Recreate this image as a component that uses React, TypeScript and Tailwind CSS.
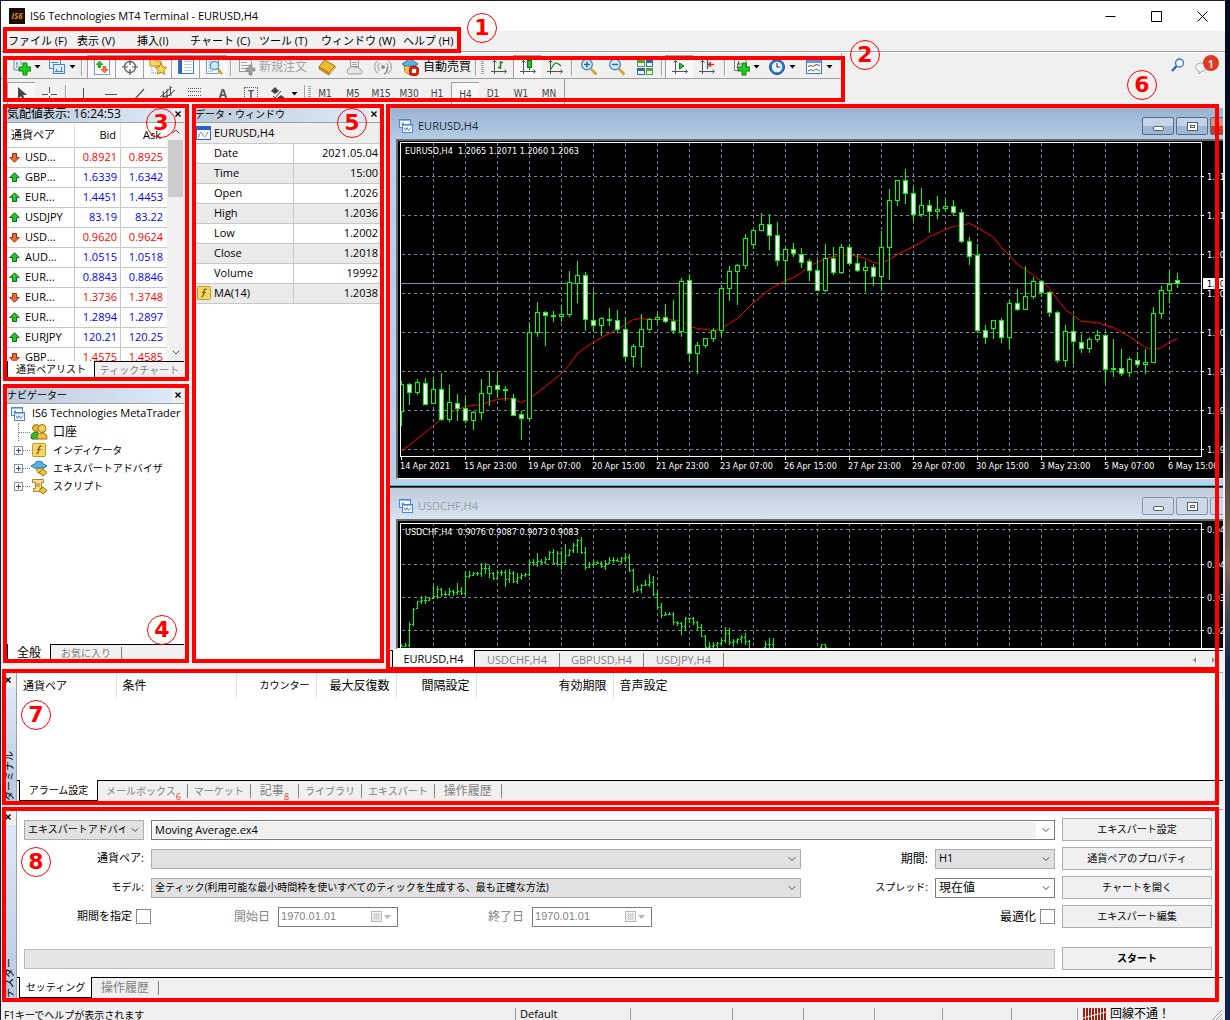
import type { ReactNode } from "react";
import { clsx } from "clsx";
import { ChevronDown, ChevronUp } from "lucide-react";

type Candle = [high: number, top: number, bottom: number, low: number, falling: 0 | 1];
type Bar = [index: number, high: number, low: number, close: number];

// y values are pixels from the top of the chart
const candles: Candle[] = [
  [240, 243, 270, 285, 0], [242, 243, 251, 264, 1], [238, 241, 251, 254, 0], [237, 242, 263, 264, 1],
  [236, 248, 262, 263, 0], [232, 248, 278, 280, 1], [244, 261, 278, 281, 0], [253, 262, 267, 280, 1],
  [256, 267, 279, 282, 1], [270, 271, 279, 289, 0], [238, 252, 271, 279, 0], [230, 245, 252, 265, 0],
  [232, 244, 248, 257, 1], [245, 248, 249, 260, 0], [253, 257, 274, 275, 1], [270, 273, 277, 299, 1],
  [181, 191, 277, 279, 0], [161, 171, 191, 196, 0], [170, 171, 174, 205, 1], [170, 174, 175, 181, 0],
  [164, 173, 175, 181, 0], [130, 141, 173, 176, 0], [120, 134, 142, 162, 0], [131, 134, 178, 190, 1],
  [150, 179, 184, 191, 1], [176, 177, 184, 195, 0], [167, 178, 179, 185, 0], [169, 179, 188, 192, 1],
  [176, 188, 215, 220, 1], [203, 205, 215, 226, 0], [173, 188, 205, 226, 0], [177, 178, 188, 190, 0],
  [172, 176, 178, 183, 0], [163, 176, 180, 182, 1], [159, 180, 189, 193, 1], [137, 140, 190, 196, 0],
  [133, 139, 212, 221, 1], [201, 204, 212, 233, 0], [197, 197, 204, 207, 0], [187, 189, 197, 201, 0],
  [144, 147, 189, 195, 0], [125, 130, 147, 160, 0], [123, 124, 130, 164, 0], [93, 97, 124, 128, 0],
  [87, 89, 103, 108, 0], [72, 83, 89, 90, 0], [73, 83, 94, 109, 1], [81, 94, 119, 125, 1],
  [107, 108, 119, 144, 0], [102, 108, 112, 116, 1], [107, 113, 121, 127, 1], [118, 120, 129, 140, 1],
  [119, 129, 149, 150, 1], [103, 117, 149, 151, 0], [106, 117, 131, 134, 1], [103, 106, 131, 133, 0],
  [103, 106, 122, 124, 1], [113, 122, 129, 131, 1], [120, 126, 129, 151, 0], [123, 126, 135, 145, 1],
  [90, 106, 135, 150, 0], [48, 59, 106, 139, 0], [39, 39, 59, 65, 0], [28, 39, 52, 63, 1],
  [45, 52, 73, 80, 1], [47, 64, 73, 76, 0], [59, 64, 70, 92, 1], [55, 68, 70, 78, 0],
  [59, 65, 67, 70, 0], [59, 65, 71, 75, 1], [68, 71, 100, 102, 1], [96, 100, 115, 124, 1],
  [103, 114, 189, 192, 1], [184, 189, 196, 203, 1], [179, 179, 187, 198, 0], [177, 179, 196, 202, 1],
  [159, 162, 196, 208, 0], [148, 162, 168, 170, 1], [125, 155, 168, 169, 0], [136, 140, 155, 158, 0],
  [139, 140, 151, 156, 1], [150, 151, 171, 176, 1], [170, 171, 219, 222, 1], [184, 190, 219, 226, 0],
  [175, 190, 200, 223, 1], [193, 201, 207, 212, 1], [196, 198, 207, 212, 0], [189, 194, 198, 201, 0],
  [193, 194, 228, 242, 1], [198, 227, 228, 236, 0], [208, 227, 232, 235, 1], [216, 218, 231, 236, 0],
  [211, 219, 223, 226, 1], [208, 221, 223, 233, 0], [166, 172, 221, 222, 0], [145, 149, 172, 178, 0],
  [130, 143, 149, 162, 0], [132, 139, 142, 147, 1],
];

const movingAverage = [
  [0, 310], [4, 284], [6, 271], [7, 268], [8, 265], [10, 263], [11, 260], [12, 258], [13, 257], [14, 258],
  [15, 261], [16, 257], [18, 245], [20, 232], [21, 223], [22, 212], [23, 206], [24, 201], [25, 196], [27, 188],
  [28, 183], [29, 178], [30, 177], [31, 178], [33, 178], [35, 179], [36, 185], [37, 187], [39, 189], [40, 187],
  [41, 182], [42, 177], [44, 161], [46, 148], [48, 139], [49, 136], [50, 131], [51, 124], [52, 121], [53, 117],
  [54, 115], [56, 113], [57, 115], [58, 117], [59, 121], [60, 122], [61, 118], [62, 113], [64, 105], [65, 101],
  [66, 95], [68, 88], [69, 85], [71, 82], [72, 86], [74, 96], [75, 106], [76, 114], [77, 123], [78, 128],
  [79, 134], [80, 140], [81, 147], [82, 158], [83, 168], [84, 174], [85, 180], [87, 181], [88, 184], [89, 186],
  [91, 195], [93, 206], [94, 208], [95, 206], [96, 201], [97, 197],
];

const bars: Bar[] = [
  [0, 123, 126, 125], [1, 122, 126, 124], [2, 101, 126, 103], [3, 87, 105, 88], [4, 80, 88, 80], [5, 75, 83, 79],
  [6, 75, 83, 79], [7, 76, 80, 77], [8, 65, 78, 75], [9, 65, 78, 68], [10, 67, 76, 73], [11, 70, 75, 73],
  [12, 67, 75, 70], [13, 69, 75, 71], [14, 62, 74, 70], [15, 66, 74, 72], [16, 51, 74, 55], [17, 50, 57, 54],
  [18, 51, 55, 52], [19, 51, 55, 52], [20, 42, 56, 47], [21, 42, 53, 47], [22, 44, 57, 52], [23, 51, 59, 57],
  [24, 49, 59, 51], [25, 49, 55, 51], [26, 49, 66, 58], [27, 48, 62, 52], [28, 50, 62, 60], [29, 52, 63, 56],
  [30, 52, 59, 54], [31, 52, 56, 53], [32, 39, 55, 41], [33, 38, 45, 41], [34, 32, 46, 40], [35, 38, 43, 41],
  [36, 36, 43, 38], [37, 30, 39, 31], [38, 28, 43, 42], [39, 30, 45, 32], [40, 30, 49, 41], [41, 23, 42, 34],
  [42, 28, 35, 29], [43, 22, 32, 24], [44, 18, 32, 19], [45, 16, 33, 31], [46, 26, 49, 46], [47, 41, 47, 43],
  [48, 39, 45, 41], [49, 40, 43, 42], [50, 40, 47, 45], [51, 39, 49, 42], [52, 36, 43, 39], [53, 36, 42, 39],
  [54, 37, 41, 40], [55, 36, 43, 37], [56, 32, 41, 36], [57, 33, 51, 49], [58, 48, 72, 70], [59, 65, 70, 68],
  [60, 63, 72, 64], [61, 59, 65, 63], [62, 53, 66, 61], [63, 55, 75, 73], [64, 70, 88, 86], [65, 82, 97, 94],
  [66, 91, 95, 93], [67, 91, 94, 93], [68, 91, 104, 101], [69, 100, 105, 102], [70, 101, 114, 105], [71, 96, 109, 97],
  [72, 97, 102, 97], [73, 96, 104, 101], [74, 100, 110, 106], [75, 103, 116, 115], [76, 114, 127, 126], [77, 121, 127, 125],
  [78, 121, 127, 124], [79, 121, 127, 122], [80, 118, 125, 119], [81, 106, 122, 112], [82, 107, 124, 121], [83, 118, 126, 120],
  [84, 117, 123, 118], [85, 114, 122, 116], [86, 112, 124, 120], [87, 119, 127, 127], [91, 120, 127, 123], [92, 117, 127, 123],
  [93, 117, 127, 127], [105, 123, 127, 123], [106, 123, 127, 126],
];

const dates = [
  "14 Apr 2021", "15 Apr 23:00", "19 Apr 07:00", "20 Apr 15:00", "21 Apr 23:00", "23 Apr 07:00", "26 Apr 15:00",
  "27 Apr 23:00", "29 Apr 07:00", "30 Apr 15:00", "3 May 23:00", "5 May 07:00", "6 May 15:00",
];

const quotes = [
  { symbol: "USD...", bid: "0.8921", ask: "0.8925", up: false },
  { symbol: "GBP...", bid: "1.6339", ask: "1.6342", up: true },
  { symbol: "EUR...", bid: "1.4451", ask: "1.4453", up: true },
  { symbol: "USDJPY", bid: "83.19", ask: "83.22", up: true },
  { symbol: "USD...", bid: "0.9620", ask: "0.9624", up: false },
  { symbol: "AUD...", bid: "1.0515", ask: "1.0518", up: true },
  { symbol: "EUR...", bid: "0.8843", ask: "0.8846", up: true },
  { symbol: "EUR...", bid: "1.3736", ask: "1.3748", up: false },
  { symbol: "EUR...", bid: "1.2894", ask: "1.2897", up: true },
  { symbol: "EURJPY", bid: "120.21", ask: "120.25", up: true },
  { symbol: "GBP...", bid: "1.4575", ask: "1.4585", up: false },
];

const dataRows = [
  ["Date", "2021.05.04"],
  ["Time", "15:00"],
  ["Open", "1.2026"],
  ["High", "1.2036"],
  ["Low", "1.2002"],
  ["Close", "1.2018"],
  ["Volume", "19992"],
  ["MA(14)", "1.2038"],
];

const periods = ["M1", "M5", "M15", "M30", "H1", "H4", "D1", "W1", "MN"];

/* ---------- callouts ---------- */

function Frame({ className }: { className: string }) {
  return <div className={clsx("pointer-events-none absolute z-10 border-4 border-[#ff0000]", className)} />;
}

function Callout({ n, className }: { n: number; className: string }) {
  return (
    <div
      className={clsx(
        "pointer-events-none absolute z-20 flex size-[30px] items-center justify-center rounded-full border border-[#ff0000] font-['DejaVu_Sans',sans-serif] text-[22px] leading-none font-bold text-[#ff0000]",
        className
      )}
    >
      {n}
    </div>
  );
}

/* ---------- icons ---------- */

function Icon({ children, size = 18 }: { children: ReactNode; size?: number }) {
  return (
    <svg width={size} height={size} viewBox="0 0 18 18" fill="none" className="shrink-0" aria-hidden="true">
      {children}
    </svg>
  );
}

function Plus() {
  return <path d="M10 5h4v4h4v4h-4v4h-4v-4H6V9h4z" fill="#1fd01f" stroke="#0b7d0b" />;
}

function NewChartIcon() {
  return (
    <Icon>
      <path d="M1 1.5h12M1 1v11h7M4 4v6M3 5h2M8 3v4" stroke="#5b8db8" />
      <Plus />
    </Icon>
  );
}

function ProfilesIcon() {
  return (
    <Icon>
      <rect x="1.5" y="1.5" width="11" height="9" fill="#e8f1fb" stroke="#4f84b8" />
      <rect x="5.5" y="6.5" width="11" height="9" fill="#dbe9f8" stroke="#4f84b8" />
      <path d="M7 13.500h8M8.500 11v3M13.500 9v4M3 4.500h7" stroke="#4f84b8" />
    </Icon>
  );
}

function MarketIcon() {
  return (
    <Icon>
      <rect x="1.5" y="0.5" width="15" height="16" fill="#fff" stroke="#6f9bd1" />
      <path d="M6.500 3l3.500 3.500H8v3H5v-3H3z" fill="#2cbf2c" stroke="#0b7d0b" strokeWidth=".6" />
      <path d="M11.500 15L8 11.500h2v-3h3v3h2z" fill="#f47a4c" stroke="#b2330b" strokeWidth=".6" />
    </Icon>
  );
}

function CrosshairIcon() {
  return (
    <Icon>
      <circle cx="9" cy="9" r="5.500" stroke="#666" strokeWidth="1.400" />
      <path d="M9 1v6M9 11v6M1 9h6M11 9h6" stroke="#555" strokeWidth="1.200" />
    </Icon>
  );
}

function NavigatorIcon() {
  return (
    <Icon>
      <path d="M1 1h5l1 2h5v5H1z" fill="#f8d768" stroke="#b98a14" />
      <path d="M3 10v5h4" stroke="#888" strokeDasharray="1 1" />
      <path d="M12 5l1.800 3.900 4 .4-3 2.800.9 4.200-3.700-2.200-3.700 2.200.9-4.200-3-2.800 4-.4z" fill="#fcd84e" stroke="#a97a0c" strokeWidth=".9" />
    </Icon>
  );
}

function TerminalIcon() {
  return (
    <Icon>
      <rect x="1.500" y="0.500" width="15" height="15" fill="#fff" stroke="#3a77c2" />
      <path d="M2 1h3v14H2z" fill="#2b63b5" />
      <path d="M7 3.500h8M7 6.500h8M7 9.500h8M7 12.500h8" stroke="#b9cfe8" />
    </Icon>
  );
}

function TesterIcon() {
  return (
    <Icon>
      <path d="M1.500.5h12v15h-12z" fill="#fff" stroke="#6f9bd1" />
      <path d="M3 4h9M3 7h3M3 10h3M3 13h5" stroke="#8eabc9" />
      <circle cx="9.500" cy="7.500" r="4.200" fill="#cfe8fb" stroke="#5d93c6" strokeWidth="1.300" />
      <path d="M13 11l4 5" stroke="#d69a1b" strokeWidth="2.400" />
    </Icon>
  );
}

function OrderIcon() {
  return (
    <Icon>
      <path d="M1.500.5h9l3 3v10h-12z" fill="#f6f6f6" stroke="#9a9a9a" />
      <path d="M3 4.500h6M3 7.500h8M3 10.500h5" stroke="#a5a5a5" />
      <path d="M11 7h3v3h3v3h-3v4h-3v-4H8v-3h3z" fill="#a0a0a0" stroke="#858585" strokeWidth=".7" />
    </Icon>
  );
}

function BookIcon() {
  return (
    <Icon>
      <path d="M6.500 2L17 8l-6 7L1 9z" fill="#f0b92e" stroke="#a26f07" />
      <path d="M1 9v2l10 6 6-7V8l-6 7z" fill="#d99a1c" stroke="#a26f07" strokeWidth=".8" />
      <path d="M11.500 15.500L16.500 9.500" stroke="#fff3c5" />
    </Icon>
  );
}

function CloudIcon() {
  return (
    <Icon>
      <rect x="4.500" y="1.500" width="8" height="7" fill="#eee" stroke="#999" />
      <path d="M6 4.500h5M6 6.500h5" stroke="#aaa" />
      <path d="M3 16a3 3 0 010-5.500C4 8 8 8 9 10c3-2 5 0 5 1.500 3 0 3 4.500 0 4.500z" fill="#e6e6e6" stroke="#999" />
    </Icon>
  );
}

function SignalIcon() {
  return (
    <Icon>
      <circle cx="9" cy="9" r="2" fill="#8e8e8e" />
      <path d="M6 13a5 5 0 010-8M12 5a5 5 0 010 8M4 15.500a8 8 0 010-13M14 2.500a8 8 0 010 13" stroke="#b4b4b4" strokeWidth="1.500" />
      <path d="M10 16c3-1 4-4 3-7" stroke="#8a8a8a" strokeWidth="1.500" />
    </Icon>
  );
}

function AutoTradeIcon() {
  return (
    <Icon>
      <path d="M3 7h12l-1 7-5 3-5-3z" fill="#f4c64e" stroke="#b2831d" />
      <path d="M1 6c2-2 4-1 5-4 1-1 5-1 6 0 1 3 3 2 5 4-4 3-12 3-16 0z" fill="#58b2e6" stroke="#27739f" />
      <rect x="8.500" y="8.500" width="9" height="9" rx="3" fill="#e2260f" stroke="#9c1403" />
      <rect x="11" y="11" width="4" height="4" fill="#fff" />
    </Icon>
  );
}

function AxisIcon({ children }: { children: ReactNode }) {
  return (
    <Icon>
      <path d="M4.500 2v14M1 13.500h15M2.500 4.500l2-2 2 2M14.500 11.500l2 2-2 2" stroke="#555" />
      {children}
    </Icon>
  );
}

function ZoomIcon({ plus }: { plus?: boolean }) {
  return (
    <Icon>
      <circle cx="7" cy="6.500" r="5.300" fill="#d8eefc" stroke="#4689c4" strokeWidth="1.400" />
      <path d={plus ? "M4 6.500h6M7 3.500v6" : "M4 6.500h6"} stroke="#2c6ca8" strokeWidth="1.600" />
      <path d="M11 11l5.500 5.500" stroke="#d9a32a" strokeWidth="2.600" />
    </Icon>
  );
}

function TilesIcon() {
  return (
    <Icon>
      <path d="M1 2h8v7H1zM10 10h7v7h-7z" fill="#55a52a" />
      <path d="M10 2h7v7h-7zM1 10h8v7H1z" fill="#3469b0" />
      <path d="M2 5h6v3H2zM11 5h5v3h-5zM2 13h6v3H2zM11 13h5v3h-5z" fill="#eef6ff" />
    </Icon>
  );
}

function IndicatorsIcon() {
  return (
    <Icon>
      <path d="M2.500.5h9l3 3v9h-12z" fill="#f8f8f8" stroke="#777" />
      <path d="M5 10l2-7M5 6h4" stroke="#444" />
      <Plus />
    </Icon>
  );
}

function ClockIcon() {
  return (
    <Icon>
      <circle cx="9" cy="9" r="7.500" fill="#2d7bd0" stroke="#1a4f93" />
      <circle cx="9" cy="9" r="5.200" fill="#eef6ff" />
      <path d="M9 5v4h3.500" stroke="#444" strokeWidth="1.200" />
    </Icon>
  );
}

function TemplateIcon() {
  return (
    <Icon>
      <rect x="1.500" y="1.500" width="15" height="14" fill="#fff" stroke="#3a77c2" />
      <path d="M2 2h14v3H2z" fill="#5d9be0" />
      <path d="M3 8.500l3-1 2 1 3-2 4 1" stroke="#8c3b1c" />
      <path d="M3 13l3-1.500 2 1.500 3-2 4 2" stroke="#2c8f2c" />
    </Icon>
  );
}

function ChartWindowIcon() {
  return (
    <svg width="14" height="14" viewBox="0 0 14 14" fill="none" className="shrink-0" aria-hidden="true">
      <rect x="0.500" y="0.500" width="11" height="8" fill="#fff" stroke="#4d86d8" />
      <path d="M2 5.500l2-2 1 2" stroke="#4d86d8" />
      <path d="M1 1h10v1H1z" fill="#8ab4ee" />
      <rect x="3.500" y="5.500" width="10" height="8" fill="#fff" stroke="#4d86d8" />
      <path d="M4 6h9v1H4z" fill="#8ab4ee" />
      <path d="M5 8.500l1.500 3L8 8.500l1.500 3L12 8.500" stroke="#4d86d8" />
    </svg>
  );
}

function FunctionIcon() {
  return (
    <svg width="14" height="14" viewBox="0 0 14 14" fill="none" className="shrink-0" aria-hidden="true">
      <rect x="0.500" y="0.500" width="13" height="13" rx="1" fill="#f5d765" stroke="#c09a25" />
      <path d="M9.500 3.500c-2-1-2.400.5-2.700 2.500S6.500 11 4.500 10.500M5 6.500h4" stroke="#6f5207" strokeWidth="1.200" />
    </svg>
  );
}

function QuoteArrow({ up }: { up: boolean }) {
  return (
    <svg width="11" height="11" viewBox="0 0 11 11" className="shrink-0" aria-hidden="true">
      {up ? (
        <path d="M5.500.8l4.700 4.700H7.500v4h-4v-4H.8z" fill="#2fc22f" stroke="#0a6b12" />
      ) : (
        <path d="M5.500 10.200L.8 5.500h2.700v-4h4v4h2.700z" fill="#f0683a" stroke="#9d2c07" />
      )}
    </svg>
  );
}

function Caret() {
  return (
    <svg width="8" height="4" viewBox="0 0 8 4" className="shrink-0" aria-hidden="true">
      <path d="M0.500 0h6L3.500 3.500z" fill="#000" />
    </svg>
  );
}

/* ---------- toolbar ---------- */

function Tool({ label, pressed, children }: { label: string; pressed?: boolean; children: ReactNode }) {
  return (
    <button
      aria-label={label}
      className={clsx(
        "flex h-[23px] w-7 shrink-0 items-center justify-center",
        pressed && "border-t border-l border-[#a0a0a0] bg-[#f8f8f8]"
      )}
    >
      {children}
    </button>
  );
}

function MenuTool({ label, children }: { label: string; children: ReactNode }) {
  return (
    <button aria-label={label} className="flex h-[23px] w-8 shrink-0 items-center">
      <span className="flex w-6 justify-center">{children}</span>
      <Caret />
    </button>
  );
}

function Divider({ className }: { className: string }) {
  return (
    <span className={clsx("flex h-full shrink-0 justify-center py-0.5", className)}>
      <span className="w-0.5 border-l border-[#a0a0a0] bg-white" />
    </span>
  );
}

function Grip() {
  return <span className="h-4 w-[3px] shrink-0 bg-[repeating-linear-gradient(#a0a0a0_0_1px,transparent_1px_2px)]" />;
}

function MainToolbar() {
  return (
    <div className="flex h-[26px] w-[841px] items-center border-r border-b border-[#a0a0a0] pt-0.5 pl-[9px]">
      <MenuTool label="新規チャート"><NewChartIcon /></MenuTool>
      <span className="w-[3px]" />
      <MenuTool label="組表示"><ProfilesIcon /></MenuTool>
      <Divider className="w-2.5" />
      <Tool label="気配値表示" pressed><MarketIcon /></Tool>
      <Tool label="データウィンドウ" pressed><CrosshairIcon /></Tool>
      <Tool label="ナビゲーター" pressed><NavigatorIcon /></Tool>
      <Tool label="ターミナル" pressed><TerminalIcon /></Tool>
      <Tool label="テスター" pressed><TesterIcon /></Tool>
      <Divider className="w-2" />
      <button disabled className="flex h-full items-center text-xs text-[#a0a0a0]">
        <span className="flex w-6 justify-center"><OrderIcon /></span>
        新規注文
      </button>
      <span className="w-1.5" />
      <Tool label="MetaEditor"><BookIcon /></Tool>
      <Tool label="VPS"><CloudIcon /></Tool>
      <Tool label="シグナル"><SignalIcon /></Tool>
      <button className="flex h-full items-center text-xs">
        <span className="flex w-[26px] justify-center"><AutoTradeIcon /></span>
        自動売買
      </button>
      <Divider className="w-2.5" />
      <Grip />
      <span className="w-px" />
      <Tool label="バーチャート">
        <AxisIcon><path d="M10.500 3v8M8 9.500h2M11 4.500h2" stroke="#0b8a0b" strokeWidth="1.500" /></AxisIcon>
      </Tool>
      <Tool label="ローソク足" pressed>
        <AxisIcon>
          <path d="M10.500 0v12" stroke="#0b8a0b" />
          <rect x="8.500" y="2.500" width="4" height="7" fill="#1fc41f" stroke="#0b7d0b" />
        </AxisIcon>
      </Tool>
      <Tool label="ラインチャート">
        <AxisIcon><path d="M5 11c3-6 5-8 10-3" stroke="#1a951a" strokeWidth="1.300" /></AxisIcon>
      </Tool>
      <Divider className="w-1.5" />
      <Tool label="拡大"><ZoomIcon plus /></Tool>
      <Tool label="縮小"><ZoomIcon /></Tool>
      <Tool label="整列"><TilesIcon /></Tool>
      <Divider className="w-1.5" />
      <Tool label="自動スクロール" pressed>
        <AxisIcon><path d="M8.500 5l4.500 3-4.500 3z" fill="#1fc41f" stroke="#0b7d0b" /></AxisIcon>
      </Tool>
      <Tool label="チャートシフト">
        <AxisIcon>
          <path d="M9.500 2v9" stroke="#27649b" strokeWidth="1.300" />
          <path d="M16 6.500h-5M13 4l-2.500 2.500L13 9" stroke="#b8350d" strokeWidth="1.300" />
        </AxisIcon>
      </Tool>
      <Divider className="w-2" />
      <MenuTool label="インディケータ"><IndicatorsIcon /></MenuTool>
      <span className="w-1" />
      <MenuTool label="時間足"><ClockIcon /></MenuTool>
      <span className="w-[5px]" />
      <MenuTool label="定型チャート"><TemplateIcon /></MenuTool>
    </div>
  );
}

function LineToolbar() {
  return (
    <div className="flex h-[25px] w-[564px] items-center overflow-hidden border-r border-[#a0a0a0] pt-1 pl-1.5">
      <Tool label="カーソル" pressed>
        <Icon><path d="M5 2v12l3-3 2 5 2-1-2-5h4z" fill="#444" /></Icon>
      </Tool>
      <Tool label="クロスヘア">
        <Icon><path d="M9.500 2v6M9.500 11v6M2 9.500h6M11 9.500h6" stroke="#555" /></Icon>
      </Tool>
      <Divider className="w-1.5" />
      <Tool label="垂直線"><Icon><path d="M9.500 3v12" stroke="#555" /></Icon></Tool>
      <Tool label="水平線"><Icon><path d="M3 9.500h12" stroke="#555" /></Icon></Tool>
      <Tool label="トレンドライン"><Icon><path d="M4 15L14 4" stroke="#555" strokeWidth="1.200" /></Icon></Tool>
      <Tool label="チャネル">
        <Icon><path d="M2 12L14 2M4 16L17 5M5 6l1 9M9 4v9M12 1l1 10M4 12l8-2" stroke="#444" /></Icon>
      </Tool>
      <Tool label="フィボナッチ">
        <Icon><path d="M2 3.500h14M2 6.500h14M2 10.500h14M2 14.500h14" stroke="#555" strokeDasharray="1 1" /></Icon>
      </Tool>
      <Tool label="テキスト"><span className="text-xs font-bold text-[#555]">A</span></Tool>
      <Tool label="テキストラベル">
        <span className="border border-dotted border-[#555] px-[3px] text-[10px] leading-3 font-bold text-[#555]">T</span>
      </Tool>
      <button aria-label="矢印" className="flex w-[37px] shrink-0 items-center">
        <span className="flex w-[26px] justify-center">
          <Icon>
            <path d="M6 2l4 4-4 3-4-3zM12 10l4 3-4 3-4-3z" fill="#444" />
            <path d="M4 11l2 2 6-7" stroke="#444" />
          </Icon>
        </span>
        <Caret />
      </button>
      <Divider className="w-1.5" />
      <Grip />
      {periods.map((period) => (
        <button
          key={period}
          className={clsx(
            "h-[23px] w-7 shrink-0 font-['DejaVu_Sans_Condensed','DejaVu_Sans',sans-serif] text-[10px] text-[#444]",
            period === "H4" && "border-t border-l border-[#a0a0a0] bg-[#f8f8f8]"
          )}
        >
          {period}
        </button>
      ))}
    </div>
  );
}

/* ---------- side panels ---------- */

function PanelTitle({ children }: { children: ReactNode }) {
  return (
    <div className="flex h-[17px] shrink-0 items-center border-b border-[#a0a0a0]">
      <h2 className="flex h-full flex-1 items-center bg-linear-to-r from-[#bccbdb] to-[#dce9f6] whitespace-nowrap">{children}</h2>
      <CloseButton />
    </div>
  );
}

function CloseButton() {
  return (
    <button aria-label="閉じる" className="flex h-4 w-3 shrink-0 items-center justify-center bg-[#f0f0f0]">
      <svg width="6" height="6" viewBox="0 0 6 6" aria-hidden="true">
        <path d="M.5.5l5 5M5.500.5l-5 5" stroke="#000" strokeWidth="1.400" />
      </svg>
    </button>
  );
}

function MarketWatch() {
  return (
    <section className="relative flex h-[280px] flex-col px-1.5 pt-0.5">
      <PanelTitle><span className="text-xs">気配値表示: 16:24:53</span></PanelTitle>
      <div className="flex h-[238px] overflow-hidden bg-white">
        <table className="w-40 table-fixed self-start text-[11px]">
          <thead>
            <tr className="h-6 border-b border-[#c8c8c8] text-[11px]">
              <th className="w-[67px] pl-1 text-left font-normal">通貨ペア</th>
              <th className="border-l border-[#e0e0e0] pr-1 text-right font-normal">Bid</th>
              <th className="border-l border-[#e0e0e0] pr-1.5 text-right font-normal">Ask</th>
            </tr>
          </thead>
          <tbody>
            {quotes.map((quote, i) => (
              <tr key={i} className={clsx("h-5 border-b border-[#c8c8c8]", quote.up ? "text-[#0000ff]" : "text-[#ff0000]")}>
                <td className="pl-0.5 text-black">
                  <span className="flex items-center gap-[5px]">
                    <QuoteArrow up={quote.up} />
                    {quote.symbol}
                  </span>
                </td>
                <td className="border-l border-[#c8c8c8] pr-[3px] text-right">{quote.bid}</td>
                <td className="border-l border-[#c8c8c8] pr-1 text-right">{quote.ask}</td>
              </tr>
            ))}
          </tbody>
        </table>
        <div className="flex flex-1 flex-col items-center bg-[#f0f0f0]">
          <ChevronUp className="h-[17px] w-3 text-[#505050]" />
          <div className="h-[57px] w-[15px] bg-[#cdcdcd]" />
          <ChevronDown className="mt-auto h-[17px] w-3 text-[#505050]" />
        </div>
      </div>
      <div className="flex h-[17px] text-[10px]">
        <button className="w-[88px] border-r border-l border-black bg-white">通貨ペアリスト</button>
        <button className="flex-1 border-t border-black text-[#808080]">ティックチャート</button>
      </div>
      <Frame className="top-0 right-px bottom-[3px] left-0.5" />
      <Callout n={3} className="top-1 left-[145px]" />
    </section>
  );
}

function TreeRow({ icon, expandable, children }: { icon: ReactNode; expandable?: boolean; children: ReactNode }) {
  return (
    <li className="flex h-[18px] items-center">
      <span className="flex w-[23px] items-center">
        {expandable ? (
          <span className="ml-[7px] flex size-[9px] shrink-0 items-center justify-center border border-[#919191] bg-white">
            <svg width="5" height="5" viewBox="0 0 5 5" aria-hidden="true">
              <path d="M0 2.500h5M2.500 0v5" stroke="#3054a5" />
            </svg>
          </span>
        ) : (
          <span className="ml-[11px] h-[18px] w-px border-l border-dotted border-[#808080]" />
        )}
        <span className="flex-1 border-t border-dotted border-[#808080]" />
      </span>
      <span className="flex w-[18px] justify-center">{icon}</span>
      <span className="pl-[5px] whitespace-nowrap">{children}</span>
    </li>
  );
}

function Navigator() {
  return (
    <section className="relative flex flex-1 flex-col px-1.5 pt-[3px] pb-2">
      <PanelTitle><span className="text-[10px]">ナビゲーター</span></PanelTitle>
      <div className="flex-1 bg-white">
        <div className="flex h-[19px] items-center gap-[7px] overflow-hidden pl-1 text-[11px] whitespace-nowrap">
          <ChartWindowIcon />
          IS6 Technologies MetaTrader
        </div>
        <ul className="text-[10px]">
          <TreeRow
            icon={
              <Icon>
                <path d="M1 15c0-4 1-5 4-6h3v7H2z" fill="#35b635" stroke="#167a16" />
                <circle cx="6" cy="5" r="3.500" fill="#e9b63a" stroke="#9c7010" />
                <circle cx="12" cy="5.500" r="4" fill="#f5cf5a" stroke="#9c7010" />
                <path d="M7 16c0-5 2-6 5-6s5 1 5 6z" fill="#f0bf3e" stroke="#9c7010" />
              </Icon>
            }
          >
            <span className="text-xs">口座</span>
          </TreeRow>
          <TreeRow expandable icon={<FunctionIcon />}>インディケータ</TreeRow>
          <TreeRow
            expandable
            icon={
              <Icon>
                <path d="M5 8h9l-1 6H8z" fill="#f4c64e" stroke="#b2831d" />
                <path d="M1 7c2-2 4-1 5-4 1-1 5-1 6 0 1 3 3 2 5 4-4 3-12 3-16 0z" fill="#58b2e6" stroke="#27739f" />
                <path d="M13 10l4 3.500-4 3.500-4-3.500z" fill="#f0c13c" stroke="#96700c" />
              </Icon>
            }
          >
            エキスパートアドバイザ
          </TreeRow>
          <TreeRow
            expandable
            icon={
              <Icon>
                <path d="M2.500 2.500h11v3h-2v6h-1l2 3h-9v-3h2v-6h-3z" fill="#f8e08c" stroke="#a8842a" />
                <path d="M6 7h4M6 9h4" stroke="#a8842a" />
                <path d="M13 10l4 3.500-4 3.500-4-3.500z" fill="#f0c13c" stroke="#96700c" />
              </Icon>
            }
          >
            スクリプト
          </TreeRow>
        </ul>
      </div>
      <div className="flex h-[17px] text-[10px]">
        <button className="w-11 border-r border-l border-black bg-white text-xs leading-none">全般</button>
        <span className="flex flex-1 items-center border-t border-black text-[#808080]">
          <button className="h-3 border-r border-[#808080] px-2.5 leading-3">お気に入り</button>
        </span>
      </div>
      <Frame className="top-0 right-px bottom-1.5 left-0.5" />
      <Callout n={4} className="bottom-6 left-[146px]" />
    </section>
  );
}

function DataWindow() {
  return (
    <section className="relative flex w-[195px] shrink-0 flex-col px-[5px] pt-0.5 pb-2">
      <PanelTitle><span className="text-[10px]">データ・ウィンドウ</span></PanelTitle>
      <div className="flex-1 bg-white">
        <table className="w-full table-fixed text-[11px]">
          <colgroup>
            <col className="w-[98px]" />
            <col />
          </colgroup>
          <thead>
            <tr className="h-5 border-b border-[#c8c8c8] bg-[#eeeeee]">
              <th colSpan={2} className="text-left font-normal">
                <span className="flex items-center gap-[3px] pl-px">
                  <svg width="15" height="14" viewBox="0 0 15 14" fill="none" aria-hidden="true">
                    <rect x="0.500" y="0.500" width="14" height="13" fill="#fff" stroke="#2a62c9" />
                    <path d="M1 1h13v3H1z" fill="#2a62c9" />
                    <path d="M2.500 11c2-7 3-5 4.500-2s2.500 2 5-3" stroke="#4d86d8" />
                  </svg>
                  EURUSD,H4
                </span>
              </th>
            </tr>
          </thead>
          <tbody>
            {dataRows.map(([name, value], i) => (
              <tr key={name} className="h-5 border-b border-[#c8c8c8] odd:bg-white even:bg-[#eaeaea]">
                <td>
                  <span className="flex items-center">
                    <span className="flex w-[19px] pl-0.5">{i === dataRows.length - 1 && <FunctionIcon />}</span>
                    {name}
                  </span>
                </td>
                <td className="border-l border-[#c8c8c8] pr-0.5 text-right">{value}</td>
              </tr>
            ))}
          </tbody>
        </table>
      </div>
      <Frame className="top-0 right-px bottom-1.5 left-0.5" />
      <Callout n={5} className="top-1 left-[147px]" />
    </section>
  );
}

/* ---------- charts ---------- */

const chartFont = "font-['DejaVu_Sans_Condensed','DejaVu_Sans',sans-serif] text-[9px]";

function Grid({ rows, bottom }: { rows: number[]; bottom: number }) {
  return (
    <g stroke="#778899" strokeDasharray="3 3" shapeRendering="crispEdges">
      {Array.from({ length: 24 }, (_, k) => (
        <line key={k} x1={35.5 + k * 32} x2={35.5 + k * 32} y1={2} y2={bottom} />
      ))}
      {rows.map((y) => (
        <line key={y} x1={4} x2={803} y1={y + 0.5} y2={y + 0.5} />
      ))}
    </g>
  );
}

function CandleChart() {
  const rows = Array.from({ length: 8 }, (_, k) => 35 + k * 39);
  const prices = ["1.2175", "1.2130", "1.2085", "1.2040", "1.2000", "1.1955", "1.1920", "1.1900"];
  return (
    <svg width="860" height="337" fill="none" className={chartFont} role="img" aria-label="EURUSD,H4">
      <Grid rows={rows} bottom={315} />
      <path d="M3 142.500h800" stroke="#8090a8" shapeRendering="crispEdges" />
      <polyline points={movingAverage.map(([i, y]) => `${3.5 + i * 8},${y + 0.5}`).join(" ")} stroke="#ff0000" />
      <g stroke="#00ff00" shapeRendering="crispEdges">
        {candles.map(([high, top, bottom, low, falling], i) => {
          const x = 3.5 + i * 8;
          return (
            <g key={i}>
              <line x1={x} x2={x} y1={high} y2={low} />
              <rect x={x - 2} y={top + 0.5} width={4} height={bottom - top} fill={falling ? "#fff" : "#000"} />
            </g>
          );
        })}
      </g>
      <path d="M0 0h2v320H0z" fill="#000" />
      <path d="M2.500 316V1.500h801V316M2 315.500h802" stroke="#fff" shapeRendering="crispEdges" />
      <g stroke="#fff" shapeRendering="crispEdges">
        {dates.map((date, k) => <line key={date} x1={3.5 + k * 64} x2={3.5 + k * 64} y1={316} y2={319} />)}
        {rows.map((y) => <line key={y} x1={804} x2={806} y1={y + 0.5} y2={y + 0.5} />)}
      </g>
      <g fill="#fff">
        <text x={7} y={13} xmlSpace="preserve">{"EURUSD,H4  1.2065 1.2071 1.2060 1.2063"}</text>
        {dates.map((date, k) => <text key={date} x={2 + k * 64} y={328}>{date}</text>)}
        {rows.map((y, k) => <text key={y} x={809} y={y + 4}>{prices[k]}</text>)}
      </g>
      <path d="M805 137h55v11h-55z" fill="#fff" />
      <text x={809} y={146} fill="#000">1.2063</text>
    </svg>
  );
}

function BarChart() {
  const rows = [8, 43, 76, 109];
  const prices = ["0.9460", "0.9410", "0.9345", "0.9285"];
  return (
    <svg width="860" height="127" fill="none" className={chartFont} role="img" aria-label="USDCHF,H4">
      <Grid rows={rows} bottom={127} />
      <g stroke="#00ff00" shapeRendering="crispEdges">
        {bars.map(([i, high, low, close], n) => {
          const x = 3 + i * 4;
          const open = n > 0 ? bars[n - 1][3] : close;
          const left = Math.min(Math.max(open, high), low - 1);
          return <path key={i} d={`M${x + 0.5} ${high}V${low}M${x - 1} ${left + 0.5}h2M${x} ${close + 0.5}h2`} />;
        })}
      </g>
      <path d="M2.500 127V2.500h801V127" stroke="#fff" shapeRendering="crispEdges" />
      <g stroke="#fff" shapeRendering="crispEdges">
        {rows.map((y) => <line key={y} x1={804} x2={806} y1={y + 0.5} y2={y + 0.5} />)}
      </g>
      <g fill="#fff">
        <text x={7} y={14} xmlSpace="preserve">{"USDCHF,H4  0.9076 0.9087 0.9073 0.9083"}</text>
        {rows.map((y, k) => <text key={y} x={809} y={y + 4}>{prices[k]}</text>)}
      </g>
    </svg>
  );
}

function ChartWindow({ title, active, children }: { title: string; active?: boolean; children: ReactNode }) {
  const control = clsx(
    "flex h-[18px] w-8 shrink-0 items-center justify-center rounded-xs border",
    active
      ? "border-[#566a8a] bg-linear-to-b from-[#c3d4e8] from-50% to-[#9db6d3] to-50%"
      : "border-[#8794ad] bg-[#cbd8e6]"
  );
  return (
    <article
      className={clsx(
        "flex flex-col overflow-hidden pt-px pl-[7px]",
        active
          ? "bg-[#b9d1ea] bg-linear-to-b from-[#9ab4d0] via-[#b9d1ea] via-10% to-[#b9d1ea] pb-1.5"
          : "min-h-0 flex-1 border-t border-[#444] bg-[#d7e4f2] bg-linear-to-b from-[#bfccda] to-[#d7e4f2] to-20%"
      )}
    >
      <header className="flex h-[30px] shrink-0 items-center pt-1 pl-[3px]">
        <ChartWindowIcon />
        <h3 className={clsx("pl-[5px] text-[11px]", active ? "text-[#1e2a3a]" : "text-[#9aa0a8]")}>{title}</h3>
        <div className="-mr-[19px] ml-auto flex gap-0.5">
          <button aria-label="最小化" className={control}>
            <span className="mt-1 h-[5px] w-[11px] rounded-xs border border-[#555d70] bg-white" />
          </button>
          <button aria-label="最大化" className={control}>
            <span className="flex h-[9px] w-[11px] items-center justify-center border border-[#555d70] bg-white">
              <span className="h-[3px] w-[5px] border border-[#555d70]" />
            </span>
          </button>
          <button aria-label="閉じる" className={clsx(control, active && "border-[#5a1a1a] from-[#d98f80] to-[#b9412d]")}>
            <svg width="9" height="8" viewBox="0 0 9 8" aria-hidden="true">
              <path d="M1 1l7 6M8 1L1 7" stroke="#fff" strokeWidth="2" />
            </svg>
          </button>
        </div>
      </header>
      <div className="overflow-hidden border-t-2 border-b border-l-2 border-t-[#696969] border-b-white border-l-[#696969] bg-black">
        {children}
      </div>
    </article>
  );
}

function ChartArea() {
  return (
    <section className="relative flex min-w-0 flex-1 flex-col pt-1 pl-1">
      <ChartWindow title="EURUSD,H4" active><CandleChart /></ChartWindow>
      <div className="border-t border-b border-t-[#2fc5dc] border-b-black" />
      <ChartWindow title="USDCHF,H4"><BarChart /></ChartWindow>
      <div className="flex h-5 shrink-0 border-t border-white text-[11px]">
        <span className="w-[3px] border-t border-black" />
        <button className="w-[83px] border-r border-l border-black bg-white">EURUSD,H4</button>
        <div className="flex flex-1 items-center border-t border-black text-[#808080]">
          <button className="h-3.5 w-[85px] border-r border-[#808080] leading-3">USDCHF,H4</button>
          <button className="h-3.5 w-[84px] border-r border-[#808080] leading-3">GBPUSD,H4</button>
          <button className="h-3.5 w-20 border-r border-[#808080] leading-3">USDJPY,H4</button>
          <svg width="24" height="7" viewBox="0 0 24 7" className="mr-[7px] ml-auto" aria-hidden="true">
            <path d="M4 0v6L1 3zM20 0v6l3-3z" fill="#909090" />
          </svg>
        </div>
      </div>
      <Frame className="top-0 right-1 -bottom-0.5 left-px" />
      <Callout n={6} className="-top-[34px] right-[66px]" />
    </section>
  );
}

/* ---------- bottom panels ---------- */

function SideTitle({ children }: { children: ReactNode }) {
  return (
    <div className="flex w-[15px] shrink-0 flex-col pl-px">
      <CloseButton />
      <h2 className="flex-1 rotate-180 overflow-hidden bg-linear-to-t from-[#dce9f6] to-[#b8c9dc] text-[10px] leading-[14px] whitespace-nowrap [text-orientation:sideways] [writing-mode:vertical-rl]">
        {children}
      </h2>
    </div>
  );
}

function Tab({ kanji, count, children }: { kanji?: boolean; count?: number; children: ReactNode }) {
  return (
    <button className={clsx("flex h-3.5 items-center border-r border-[#808080]", kanji ? "px-[9px] text-xs" : "px-1.5 text-[10px]")}>
      {children}
      {count && <sub className="mt-2 text-[9px] text-[#e03030]">{count}</sub>}
    </button>
  );
}

function Terminal() {
  return (
    <section className="relative mr-0.5 flex h-[136px] shrink-0 pt-[3px] pb-1">
      <SideTitle>ターミナル</SideTitle>
      <div className="flex min-w-0 flex-1 flex-col border-t border-l border-[#a0a0a0] bg-white">
        <table className="w-full table-fixed text-xs">
          <thead>
            <tr className="h-[26px] text-left *:border-r *:border-[#e2e2e2] *:px-1.5 *:font-normal *:whitespace-nowrap">
              <th className="w-[99px] text-[11px]">通貨ペア</th>
              <th className="w-[120px]">条件</th>
              <th className="w-20 text-right text-[10px]">カウンター</th>
              <th className="w-20 text-right">最大反復数</th>
              <th className="w-20 text-right">間隔設定</th>
              <th className="w-[137px] text-right">有効期限</th>
              <th>音声設定</th>
            </tr>
          </thead>
        </table>
        <div className="flex-1" />
        <div className="flex h-[21px] bg-[#f0f0f0] text-[10px]">
          <span className="w-0.5 border-t border-black" />
          <button className="w-[79px] border-r border-b border-l border-black bg-white">アラーム設定</button>
          <div className="flex flex-1 items-center border-t border-black pl-0.5 text-[#808080]">
            <Tab count={6}>メールボックス</Tab>
            <Tab>マーケット</Tab>
            <Tab kanji count={8}>記事</Tab>
            <Tab>ライブラリ</Tab>
            <Tab>エキスパート</Tab>
            <Tab kanji>操作履歴</Tab>
          </div>
        </div>
      </div>
      <Frame className="top-0 right-1 bottom-0 left-px" />
      <Callout n={7} className="top-[31px] left-5" />
    </section>
  );
}

function Select({ id, label, value, className, muted }: { id: string; label?: string; value: string; className: string; muted?: boolean }) {
  return (
    <span className={clsx("grid h-5 items-center", className)}>
      <select
        id={id}
        aria-label={label}
        className={clsx(
          "col-start-1 row-start-1 h-5 w-full appearance-none border pr-[18px] pl-[3px]",
          muted ? "border-[#adadad] bg-[#e1e1e1]" : "border-[#7a7a7a] bg-white"
        )}
      >
        <option>{value}</option>
      </select>
      <ChevronDown className="pointer-events-none col-start-1 row-start-1 mr-[3px] size-3 justify-self-end text-[#505050]" />
    </span>
  );
}

function DateField({ id, label }: { id: string; label: string }) {
  return (
    <div className="flex items-center gap-2 text-[#838383]">
      <label htmlFor={id} className="text-xs">{label}</label>
      <span className="flex h-5 w-[120px] items-center border border-[#7a7a7a] pr-[5px] pl-0.5">
        <input id={id} disabled defaultValue="1970.01.01" className="w-0 flex-1 font-['Liberation_Sans',sans-serif] text-[11px]" />
        <svg width="21" height="12" viewBox="0 0 21 12" fill="none" aria-hidden="true">
          <rect x="0.500" y="0.500" width="10" height="10" fill="#f2f2f2" stroke="#b8b8b8" />
          <path d="M2 3.500h7M2 5.500h7M2 7.500h7M3.500 2v7M5.500 2v7M7.500 2v7" stroke="#d0d0d0" />
          <path d="M13 4h7l-3.500 4z" fill="#b5b5b5" />
        </svg>
      </span>
    </div>
  );
}

function Tester() {
  const button = "h-[23px] w-[150px] shrink-0 border border-[#adadad] bg-[#f0f0f0]";
  const row = "flex items-center gap-[7px]";
  return (
    <section className="relative mr-0.5 flex h-[199px] shrink-0 pt-1 pb-1.5">
      <SideTitle>テスター</SideTitle>
      <div className="flex min-w-0 flex-1 flex-col border-t border-l border-[#a0a0a0] bg-white">
        <form className="flex flex-1 flex-col gap-1.5 pt-2 pr-[11px] pl-[7px] text-[10px]">
          <div className={row}>
            <Select id="kind" label="種類" value="エキスパートアドバイザ" muted className="w-[120px]" />
            <Select id="expert" label="エキスパート" value="Moving Average.ex4" className="flex-1 text-[11px] [&>select]:bg-[#f0f0f0] [&>select]:bg-clip-content [&>select]:py-px" />
            <button type="button" className={button}>エキスパート設定</button>
          </div>
          <div className={row}>
            <label htmlFor="symbol" className="w-[120px] text-right text-[11px]">通貨ペア:</label>
            <Select id="symbol" value="" muted className="max-w-[650px] flex-1" />
            <label htmlFor="period" className="ml-auto text-xs">期間:</label>
            <Select id="period" value="H1" muted className="w-[120px] text-[11px]" />
            <button type="button" className={button}>通貨ペアのプロパティ</button>
          </div>
          <div className={row}>
            <label htmlFor="model" className="w-[120px] text-right">モデル:</label>
            <Select
              id="model"
              value="全ティック(利用可能な最小時間枠を使いすべてのティックを生成する、最も正確な方法)"
              muted
              className="max-w-[650px] flex-1"
            />
            <label htmlFor="spread" className="ml-auto">スプレッド:</label>
            <Select id="spread" value="現在値" className="w-[120px] text-xs" />
            <button type="button" className={button}>チャートを開く</button>
          </div>
          <div className={row}>
            <label className="mr-[76px] flex w-[127px] items-center justify-end gap-1 text-[11px]">
              期間を指定
              <input type="checkbox" className="size-[15px] appearance-none border border-[#8a8a8a] bg-white" />
            </label>
            <DateField id="from" label="開始日" />
            <span className="w-[76px]" />
            <DateField id="to" label="終了日" />
            <label className="ml-auto flex items-center gap-1 text-xs">
              最適化
              <input type="checkbox" className="size-[15px] appearance-none border border-[#8a8a8a] bg-white" />
            </label>
            <button type="button" className={button}>エキスパート編集</button>
          </div>
          <div className={clsx(row, "pt-[13px]")}>
            <div role="progressbar" aria-label="進捗" className="h-5 flex-1 border border-[#bcbcbc] bg-[#e6e6e6]" />
            <button type="button" className={clsx(button, "font-bold")}>スタート</button>
          </div>
        </form>
        <div className="flex h-[21px] bg-[#f0f0f0] text-[10px]">
          <span className="w-0.5 border-t border-black" />
          <button className="w-[73px] border-r border-b border-l border-black bg-white">セッティング</button>
          <div className="flex flex-1 items-center border-t border-black text-[#808080]">
            <Tab kanji>操作履歴</Tab>
          </div>
        </div>
      </div>
      <Frame className="top-0.5 right-1 bottom-0.5 left-px" />
      <Callout n={8} className="top-[42px] left-5" />
    </section>
  );
}

function StatusBar() {
  return (
    <footer className="flex h-[17px] shrink-0 items-end overflow-hidden pt-1 pr-0.5 text-[10px] leading-[12px] whitespace-nowrap *:border-l *:border-[#a0a0a0]">
      <span className="flex-1 border-none pl-[3px]">F1キーでヘルプが表示されます</span>
      <span className="h-full w-[115px] pl-1 text-[11px]">Default</span>
      <span className="h-full w-[102px]" />
      <span className="h-full w-[71px]" />
      <span className="h-full w-[71px]" />
      <span className="h-full w-[68px]" />
      <span className="h-full w-[69px]" />
      <span className="h-full w-[66px]" />
      <span className="flex h-full w-[146px] items-start gap-1 pl-[5px] text-xs leading-3">
        <svg width="23" height="12" viewBox="0 0 23 12" aria-hidden="true">
          <path d="M0 0h2v12H0zM3 0h2v12H3zM6 0h2v12H6zM9 0h2v12H9zM12 0h2v12h-2zM15 0h2v12h-2zM18 0h2v12h-2zM21 0h2v12h-2z" fill="#9c1e10" />
          <path d="M0 10l23-6" stroke="#f0f0f0" />
        </svg>
        回線不通！
        <svg width="10" height="10" viewBox="0 0 10 10" className="mt-0.5 mr-px ml-auto" aria-hidden="true">
          <path d="M0 10L10 0M4 10l6-6M8 10l2-2" stroke="#a0a0a0" />
        </svg>
      </span>
    </footer>
  );
}

export default function App() {
  return (
    <div className="flex min-h-screen font-['Open_Sans','Noto_Sans_CJK_JP',sans-serif] text-black">
      <main className="flex min-w-0 flex-1 flex-col border-t border-l border-[#1b1b2b] bg-[#f0f0f0]">
        <header className="flex h-[30px] shrink-0 items-center bg-white pl-2">
          <span className="flex h-4 w-4 items-center justify-center bg-[#1a0d05] text-[8px] font-bold text-[#d98a2b] italic">IS6</span>
          <h1 className="flex-1 pl-[5px] text-[11px]">IS6 Technologies MT4 Terminal - EURUSD,H4</h1>
          <div className="flex *:flex *:w-[46px] *:justify-center">
            <button aria-label="最小化">
              <svg width="11" height="11" viewBox="0 0 11 11"><path d="M.5 5.500h10" stroke="#000" /></svg>
            </button>
            <button aria-label="最大化">
              <svg width="11" height="11" viewBox="0 0 11 11"><path d="M.5.5h10v10H.5z" fill="none" stroke="#000" /></svg>
            </button>
            <button aria-label="閉じる">
              <svg width="11" height="11" viewBox="0 0 11 11"><path d="M.5.5l10 10M10.500.5l-10 10" stroke="#000" /></svg>
            </button>
          </div>
        </header>

        <div className="h-[22px] shrink-0 border-b border-white">
          <nav className="relative h-full border-b border-[#a0a0a0]">
            <div className="grid h-full grid-cols-[69px_60px_53px_69px_62px_82px_auto] items-center justify-start pl-[7px] text-[11px] *:text-left">
              <button>ファイル (F)</button>
              <button>表示 (V)</button>
              <button>挿入(I)</button>
              <button>チャート (C)</button>
              <button>ツール (T)</button>
              <button>ウィンドウ (W)</button>
              <button>ヘルプ (H)</button>
            </div>
            <Frame className="-top-1 -bottom-0.5 left-0.5 w-[458px]" />
            <Callout n={1} className="-top-[18px] left-[466px]" />
          </nav>
        </div>

        <div className="relative flex h-[51px] shrink-0 items-start">
          <div>
            <MainToolbar />
            <LineToolbar />
          </div>
          <Frame className="top-[3px] bottom-0.5 left-0.5 w-[842px]" />
          <Callout n={2} className="-top-[13px] left-[849px]" />
          <div className="ml-auto flex items-center gap-2.5 pt-0.5 pr-1.5">
            <svg width="14" height="14" viewBox="0 0 14 14" fill="none" aria-label="検索">
              <circle cx="8.500" cy="5" r="4" fill="#eef5ff" stroke="#3b6fd0" strokeWidth="1.300" />
              <path d="M5.500 8L1 13" stroke="#2b5cc4" strokeWidth="2.200" />
            </svg>
            <span className="relative flex h-5 w-6 items-end">
              <svg width="15" height="13" viewBox="0 0 15 13" aria-hidden="true">
                <path d="M7 1c8 0 8 8 0 8l-3 3V9C-1 8-1 1 7 1z" fill="#f2f2f2" stroke="#a8a8a8" />
              </svg>
              <span className="absolute top-0 right-0 flex size-4 items-center justify-center rounded-full bg-[#dd3a22] text-[11px] leading-none font-semibold text-white">
                1
              </span>
            </span>
          </div>
        </div>

        <div className="flex flex-1 pr-0.5">
          <div className="flex w-[189px] shrink-0 flex-col">
            <MarketWatch />
            <Navigator />
          </div>
          <DataWindow />
          <ChartArea />
        </div>

        <Terminal />
        <Tester />
        <StatusBar />
      </main>
      <div className="w-[5px] shrink-0 bg-linear-to-b from-[#050c20] from-30% via-[#8a6a5c] via-55% to-[#12244c] to-65%" />
    </div>
  );
}
